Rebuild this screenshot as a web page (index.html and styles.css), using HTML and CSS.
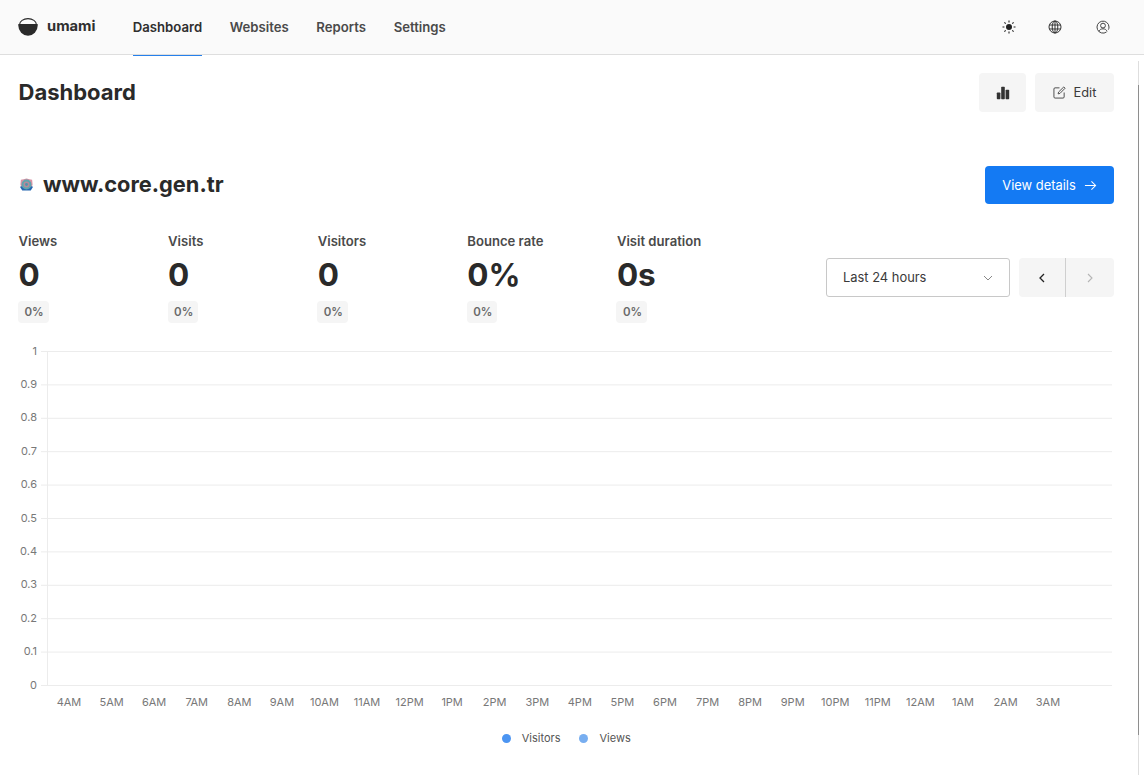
FILE: index.html
```html
<!DOCTYPE html>
<html lang="en">
<head>
<meta charset="utf-8">
<title>Dashboard | umami</title>
<link rel="stylesheet" href="styles.css">
</head>
<body>
<header class="topbar">
  <div class="logo">
    <svg class="logo-icon" viewBox="0 0 20 18" width="20" height="18"><path d="M1.6 6.5A8.4 5.9 0 0 1 18.4 6.5" fill="none" stroke="#2a2a2a" stroke-width="1.1"/><path d="M.3 6H19.7V7.5A9.7 10.2 0 0 1 .3 7.5Z" fill="#2a2a2a"/></svg>
    <span>umami</span>
  </div>
  <nav class="nav">
    <a class="nav-item active">Dashboard</a>
    <a class="nav-item">Websites</a>
    <a class="nav-item">Reports</a>
    <a class="nav-item">Settings</a>
  </nav>
  <div class="tools">
    <svg class="tool" viewBox="0 0 14 14" width="14" height="14"><circle cx="7" cy="7" r="3" fill="#222"/><path d="M7 .5V2.4M7 11.6V13.5M.5 7H2.4M11.6 7H13.5M2.4 2.4L3.7 3.7M10.3 10.3L11.6 11.6M11.6 2.4L10.3 3.7M3.7 10.3L2.4 11.6" stroke="#222" stroke-width="1.1" fill="none"/></svg>
    <svg class="tool" viewBox="0 0 14 14" width="14" height="14"><g fill="none" stroke="#333" stroke-width="1"><circle cx="7" cy="7" r="6"/><ellipse cx="7" cy="7" rx="2.8" ry="6"/><path d="M7 1V13M1.3 5H12.7M1.3 9H12.7"/></g></svg>
    <svg class="tool tool-user" viewBox="0 0 14 14" width="14" height="14"><g fill="none" stroke="#444" stroke-width="1"><path d="M10.5 12A6 6 0 1 1 13 7C13 8 12.8 8.8 12.4 9.6"/><circle cx="7" cy="5.6" r="2.4"/><path d="M2.9 11.4C3.6 9.6 5.1 8.8 7 8.8S10.4 9.6 11.1 11.4"/></g></svg>
  </div>
</header>
<div class="scrolltrack"><div class="scrollthumb"></div></div>
<main class="page">
  <div class="page-head">
    <h1>Dashboard</h1>
    <div class="actions">
      <button class="btn btn-icon"><svg viewBox="0 0 14 14" width="14" height="14"><rect x=".8" y="6.6" width="3.6" height="6.6" rx=".7" fill="#333"/><rect x="5.2" y=".8" width="3.6" height="12.4" rx=".7" fill="#333"/><rect x="9.6" y="3.8" width="3.6" height="9.4" rx=".7" fill="#333"/></svg></button>
      <button class="btn btn-edit"><svg viewBox="0 0 14 14" width="13" height="13"><g fill="none" stroke="#444" stroke-width="1"><path d="M7 2H2.2A1.2 1.2 0 0 0 1 3.2V11.8A1.2 1.2 0 0 0 2.2 13H10.8A1.2 1.2 0 0 0 12 11.8V7"/><path d="M5.5 8.5L6 6.5 11.6 1 13 2.4 7.5 8Z"/></g></svg>Edit</button>
    </div>
  </div>
  <section class="site-head">
    <div class="site-name">
      <svg class="favicon" viewBox="0 0 16 16" width="15" height="15"><path d="M8 1.5L11 2.5 14 3 14.5 8 13.5 11H2.5L1.5 8 2 3 5 2.5Z" fill="#d992a4"/><path d="M1 10.5L3.5 14.5H12.5L15 10.5 12 9.5H4Z" fill="#2566b0"/><circle cx="8" cy="8" r="5.3" fill="#5fa4ad"/><circle cx="8" cy="8" r="3.2" fill="#b58a9a"/><circle cx="8" cy="8" r="1.5" fill="#4d94ad"/></svg>
      <h2>www.core.gen.tr</h2>
    </div>
    <button class="btn-primary">View details<svg viewBox="0 0 14 14" width="13" height="13"><path d="M1 7H12.5M8 2.5L12.5 7 8 11.5" fill="none" stroke="#fff" stroke-width="1.1"/></svg></button>
  </section>
  <section class="stats-row">
    <div class="metrics">
      <div class="metric"><div class="m-label">Views</div><div class="m-value">0</div><span class="m-badge">0%</span></div>
      <div class="metric"><div class="m-label">Visits</div><div class="m-value">0</div><span class="m-badge">0%</span></div>
      <div class="metric"><div class="m-label">Visitors</div><div class="m-value">0</div><span class="m-badge">0%</span></div>
      <div class="metric"><div class="m-label">Bounce rate</div><div class="m-value">0%</div><span class="m-badge">0%</span></div>
      <div class="metric"><div class="m-label">Visit duration</div><div class="m-value">0s</div><span class="m-badge">0%</span></div>
    </div>
    <div class="range">
      <div class="select"><span>Last 24 hours</span><svg viewBox="0 0 10 10" width="10" height="10"><path d="M1 3L5 7 9 3" fill="none" stroke="#888" stroke-width="1"/></svg></div>
      <div class="pager">
        <button class="page-btn page-prev"><svg viewBox="0 0 10 10" width="10" height="10"><path d="M7 1L3 5 7 9" fill="none" stroke="#222" stroke-width="1.3"/></svg></button>
        <button class="page-btn page-next"><svg viewBox="0 0 10 10" width="10" height="10"><path d="M3 1L7 5 3 9" fill="none" stroke="#b5b5b5" stroke-width="1.1"/></svg></button>
      </div>
    </div>
  </section>
  <svg class="chart" viewBox="0 -8 1144 398" width="1144" height="398">
    <g class="grid">
      <path d="M41 1.5H1112M41 34.9H1112M41 68.3H1112M41 101.7H1112M41 135.1H1112M41 168.5H1112M41 201.9H1112M41 235.3H1112M41 268.7H1112M41 302.1H1112M41 335.5H1112M47.5 1V336"/>
    </g>
    <g class="ylab">
      <text x="37" y="4.5">1</text><text x="37" y="37.9">0.9</text><text x="37" y="71.3">0.8</text><text x="37" y="104.7">0.7</text><text x="37" y="138.1">0.6</text><text x="37" y="171.5">0.5</text><text x="37" y="204.9">0.4</text><text x="37" y="238.3">0.3</text><text x="37" y="271.7">0.2</text><text x="37" y="305.1">0.1</text><text x="37" y="338.5">0</text>
    </g>
    <g class="xlab">
      <text x="69" y="356">4AM</text><text x="111.6" y="356">5AM</text><text x="154.1" y="356">6AM</text><text x="196.7" y="356">7AM</text><text x="239.3" y="356">8AM</text><text x="281.9" y="356">9AM</text><text x="324.4" y="356">10AM</text><text x="367" y="356">11AM</text><text x="409.6" y="356">12PM</text><text x="452.1" y="356">1PM</text><text x="494.7" y="356">2PM</text><text x="537.3" y="356">3PM</text><text x="579.8" y="356">4PM</text><text x="622.4" y="356">5PM</text><text x="665" y="356">6PM</text><text x="707.6" y="356">7PM</text><text x="750.1" y="356">8PM</text><text x="792.7" y="356">9PM</text><text x="835.3" y="356">10PM</text><text x="877.8" y="356">11PM</text><text x="920.4" y="356">12AM</text><text x="963" y="356">1AM</text><text x="1005.5" y="356">2AM</text><text x="1048" y="356">3AM</text>
    </g>
  </svg>
  <div class="legend">
    <span class="leg"><i class="dot dot-a"></i>Visitors</span>
    <span class="leg"><i class="dot dot-b"></i>Views</span>
  </div>
</main>
</body>
</html>
```
FILE: styles.css
```css
* { box-sizing: border-box; }
html, body { margin: 0; height: 100%; overflow: hidden; }
body { background: #fff; color: #2a2a2a; font-family: Inter, "Liberation Sans", sans-serif; width: 1144px; height: 779px; position: relative; }
.topbar { height: 55px; background: #fafafa; border-bottom: 1px solid #dedede; display: flex; align-items: center; padding: 0 18px; }
.logo { display: flex; align-items: center; gap: 9px; width: 114.8px; font-size: 14.7px; font-weight: 700; color: #2f2f2f; }
.logo span { position: relative; top: -1px; }
.logo-icon { display: block; }
.nav { display: flex; gap: 27.7px; height: 55px; }
.nav-item { font-size: 13.15px; font-weight: 600; color: #4a4a4a; line-height: 55px; height: 56px; border-bottom: 1px solid transparent; }
.nav-item.active { color: #2f2f2f; border-bottom-color: #2680eb; }
.tools { margin-left: auto; display: flex; gap: 32px; padding-right: 16px; align-items: center; }
.tool { display: block; }
.tool-user { margin-left: 2px; }
.scrolltrack { position: absolute; left: 1138px; top: 61px; width: 1px; height: 714px; background: #dedede; }
.scrollthumb { margin-top: 24px; height: 650px; background: #8e8e8e; }
.page { padding: 0 30px 0 18.5px; }
.page-head { display: flex; justify-content: space-between; align-items: center; height: 39px; margin-top: 18px; }
h1 { margin: 0; font-size: 22px; font-weight: 700; color: #2a2a2a; position: relative; top: -1px; }
.actions { display: flex; gap: 9px; }
.btn { height: 39px; border: 0; border-radius: 4px; background: #f5f5f5; display: flex; align-items: center; justify-content: center; font: 400 12.8px Inter, sans-serif; color: #3a3a3a; padding: 0; }
.btn-icon { width: 47px; }
.btn-edit { width: 79px; gap: 8px; }
.site-head { display: flex; justify-content: space-between; align-items: center; margin-top: 54px; height: 38px; }
.site-name { display: flex; align-items: center; gap: 9.5px; }
.favicon { display: block; position: relative; top: -1px; }
h2 { margin: 0; font-size: 21.8px; font-weight: 700; color: #2a2a2a; position: relative; top: -1px; }
.btn-primary { width: 129px; height: 38px; background: #147af3; color: #fff; border: 0; border-radius: 4px; display: flex; align-items: center; justify-content: center; gap: 8px; font: 400 12.9px Inter, sans-serif; padding: 0; }
.stats-row { display: flex; justify-content: space-between; margin-top: 29px; height: 93px; }
.metrics { display: flex; }
.metric { width: 149.6px; }
.m-label { font-size: 13.1px; font-weight: 600; color: #4a4a4a; line-height: 16px; }
.m-value { font-size: 31.5px; font-weight: 700; color: #2a2a2a; line-height: 39px; margin-top: 6px; }
.m-badge { display: inline-block; margin: 7px 0 0 -.5px; background: #f5f5f5; border-radius: 4px; font-size: 11.5px; font-weight: 600; color: #6a6a6a; height: 22px; line-height: 22px; padding: 0 5px 0 6.5px; }
.range { display: flex; gap: 9px; margin-top: 25px; height: 39px; }
.select { width: 184px; height: 39px; border: 1px solid #c8c8c8; border-radius: 3px; display: flex; align-items: center; justify-content: space-between; padding: 0 16px; font-size: 12.9px; color: #3a3a3a; }
.pager { display: flex; width: 95px; height: 39px; background: #f5f5f5; border-radius: 4px; }
.page-btn { border: 0; background: none; padding: 0; display: flex; align-items: center; justify-content: center; }
.page-prev { width: 46px; }
.page-next { width: 49px; border-left: 1px solid #cfcfcf; }
.chart { display: block; margin: 16px 0 0 -18.5px; }
.grid path { stroke: #ececec; stroke-width: 1; fill: none; }
.ylab text { font: 400 11px Inter, sans-serif; fill: #787878; text-anchor: end; }
.xlab text { font: 400 11px Inter, sans-serif; fill: #787878; text-anchor: middle; }
.legend { display: flex; justify-content: center; gap: 19px; font-size: 11px; color: #555; margin: -9px 0 0 0; line-height: 14px; }
.leg { display: flex; align-items: center; gap: 11px; }
.dot { width: 9px; height: 9px; border-radius: 50%; display: block; }
.dot-a { background: #4c95f2; }
.dot-b { background: #78aef0; }
```
